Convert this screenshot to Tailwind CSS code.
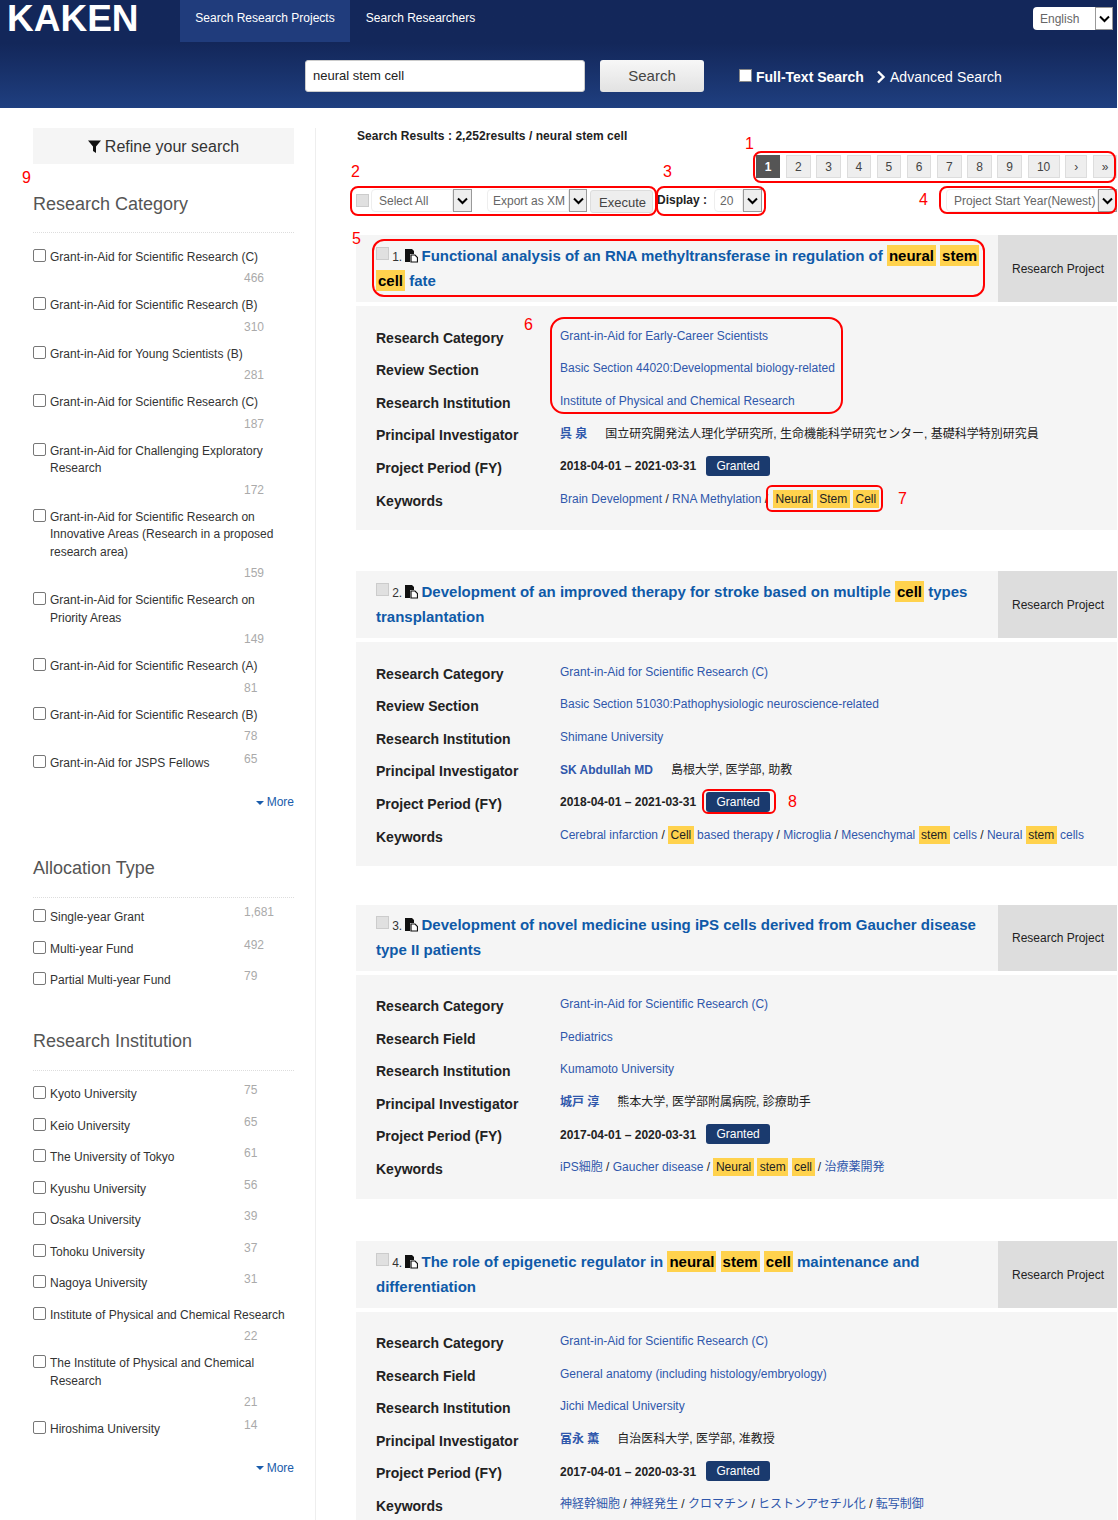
<!doctype html>
<html lang="en">
<head>
    <meta charset="UTF-8">
    <meta name="viewport" content="width=device-width, initial-scale=1.0">
    <script src="https://cdn.jsdelivr.net/npm/@tailwindcss/browser@4"></script>
    <title>KAKEN - Search Research Projects</title>
</head>
<body class="bg-white">
<div class="relative w-[1118px] h-[1520px] overflow-hidden text-[12px] text-[#333] [font-family:'Liberation_Sans','Noto_Sans_CJK_JP',sans-serif]">

    <!-- header -->
    <header class="w-[1117px] h-[108px] bg-gradient-to-b from-[#13275a] from-40% to-[#1f3f80]">
        <div class="flex h-[42px]">
            <a class="w-[180px] pl-[7px] pt-[1px] text-[37px] leading-[36px] font-bold text-white">KAKEN</a>
            <a class="w-[170px] h-[42px] pb-[6px] flex items-center justify-center bg-[#203c7c] text-white">Search Research Projects</a>
            <a class="w-[141px] h-[42px] pb-[6px] flex items-center justify-center text-white">Search Researchers</a>
            <div class="ml-auto mr-[4px] mt-[7px] flex h-[23px]">
                <select class="appearance-none w-[62px] h-[23px] pl-[7px] bg-white rounded-l-[4px] text-[#666]"><option>English</option></select>
                <span class="w-[18px] h-[23px] flex items-center justify-center bg-white border border-[#999]"><svg class="w-[11px] h-[8px]" viewBox="0 0 11 8"><path d="M1 1.5l4.5 4.5L10 1.5" fill="none" stroke="#000" stroke-width="2"/></svg></span>
            </div>
        </div>
        <div class="flex items-center pl-[305px] mt-[18px]">
            <input type="text" value="neural stem cell" class="w-[280px] h-[32px] px-[7px] pb-[2px] bg-white rounded-[3px] border border-[#ccc] text-[13px] text-[#222]">
            <button class="ml-[15px] w-[104px] h-[32px] rounded-[3px] bg-gradient-to-b from-[#f7f7f7] to-[#e2e2e2] text-[15px] text-[#444]">Search</button>
            <input type="checkbox" class="appearance-none ml-[35px] -mt-[2px] w-[13px] h-[13px] bg-white border border-[#888]">
            <span class="ml-[4px] pt-[2px] text-[14px] font-bold text-white">Full-Text Search</span>
            <svg class="ml-[12px] mt-[2px] w-[10px] h-[14px]" viewBox="0 0 10 14"><path d="M2 1.5l5.5 5.5L2 12.5" fill="none" stroke="#fff" stroke-width="2.4"/></svg>
            <span class="ml-[4px] pt-[2px] text-[14px] tracking-[0.1px] text-white">Advanced Search</span>
        </div>
    </header>

    <div class="flex">
        <!-- sidebar -->
        <aside class="mt-[20px] w-[316px] h-[1392px] pl-[33px] pr-[21px] border-r border-[#eee]">
            <div class="h-[36px] pt-[1px] flex items-center justify-center bg-[#f5f5f5] text-[16px] text-[#333]">
                <svg class="w-[13px] h-[13px] mr-[4px]" viewBox="0 0 13 13"><path d="M0 .5h13L8 6.5V13L5 11V6.5z" fill="#111"/></svg>Refine your search
            </div>

            <h2 class="mt-[26px] h-[43px] pb-[15px] leading-[28px] text-[18px] text-[#555] border-b border-dotted border-[#ddd]">Research Category</h2>
            <div class="mt-[15.5px]">
                <div><div class="flex leading-[17.5px]"><input type="checkbox" class="appearance-none shrink-0 w-[13px] h-[13px] mr-[4px] border border-[#777] rounded-[2px]"><span>Grant-in-Aid for Scientific Research (C)</span></div><div class="h-[31px] pl-[211px] pt-[1px] leading-[22px] text-[#aaa]">466</div></div>
                <div><div class="flex leading-[17.5px]"><input type="checkbox" class="appearance-none shrink-0 w-[13px] h-[13px] mr-[4px] border border-[#777] rounded-[2px]"><span>Grant-in-Aid for Scientific Research (B)</span></div><div class="h-[31px] pl-[211px] pt-[1px] leading-[22px] text-[#aaa]">310</div></div>
                <div><div class="flex leading-[17.5px]"><input type="checkbox" class="appearance-none shrink-0 w-[13px] h-[13px] mr-[4px] border border-[#777] rounded-[2px]"><span>Grant-in-Aid for Young Scientists (B)</span></div><div class="h-[31px] pl-[211px] pt-[1px] leading-[22px] text-[#aaa]">281</div></div>
                <div><div class="flex leading-[17.5px]"><input type="checkbox" class="appearance-none shrink-0 w-[13px] h-[13px] mr-[4px] border border-[#777] rounded-[2px]"><span>Grant-in-Aid for Scientific Research (C)</span></div><div class="h-[31px] pl-[211px] pt-[1px] leading-[22px] text-[#aaa]">187</div></div>
                <div><div class="flex leading-[17.5px]"><input type="checkbox" class="appearance-none shrink-0 w-[13px] h-[13px] mr-[4px] border border-[#777] rounded-[2px]"><span>Grant-in-Aid for Challenging Exploratory Research</span></div><div class="h-[31px] pl-[211px] pt-[1px] leading-[22px] text-[#aaa]">172</div></div>
                <div><div class="flex leading-[17.5px]"><input type="checkbox" class="appearance-none shrink-0 w-[13px] h-[13px] mr-[4px] border border-[#777] rounded-[2px]"><span>Grant-in-Aid for Scientific Research on Innovative Areas (Research in a proposed research area)</span></div><div class="h-[31px] pl-[211px] pt-[1px] leading-[22px] text-[#aaa]">159</div></div>
                <div><div class="flex leading-[17.5px]"><input type="checkbox" class="appearance-none shrink-0 w-[13px] h-[13px] mr-[4px] border border-[#777] rounded-[2px]"><span>Grant-in-Aid for Scientific Research on Priority Areas</span></div><div class="h-[31px] pl-[211px] pt-[1px] leading-[22px] text-[#aaa]">149</div></div>
                <div><div class="flex leading-[17.5px]"><input type="checkbox" class="appearance-none shrink-0 w-[13px] h-[13px] mr-[4px] border border-[#777] rounded-[2px]"><span>Grant-in-Aid for Scientific Research (A)</span></div><div class="h-[31px] pl-[211px] pt-[1px] leading-[22px] text-[#aaa]">81</div></div>
                <div><div class="flex leading-[17.5px]"><input type="checkbox" class="appearance-none shrink-0 w-[13px] h-[13px] mr-[4px] border border-[#777] rounded-[2px]"><span>Grant-in-Aid for Scientific Research (B)</span></div><div class="h-[31px] pl-[211px] pt-[1px] leading-[22px] text-[#aaa]">78</div></div>
                <div class="flex leading-[17.5px]"><input type="checkbox" class="appearance-none shrink-0 w-[13px] h-[13px] mr-[4px] border border-[#777] rounded-[2px]"><span class="w-[194px]">Grant-in-Aid for JSPS Fellows</span><span class="-mt-[4px] text-[#aaa]">65</span></div>
            </div>
            <div class="mt-[21.5px] flex items-center justify-end leading-[16px] text-[#1a5cab]"><span class="mr-[3px] mt-[1px] border-x-[4px] border-t-[4px] border-x-transparent border-t-[#1a5cab]"></span>More</div>

            <h2 class="mt-[44px] h-[44px] pb-[16px] leading-[28px] text-[18px] text-[#555] border-b border-dotted border-[#ddd]">Allocation Type</h2>
            <div class="mt-[11px]">
                <div class="flex h-[31.5px] leading-[17.5px]"><input type="checkbox" class="appearance-none shrink-0 w-[13px] h-[13px] mr-[4px] border border-[#777] rounded-[2px]"><span class="w-[194px]">Single-year Grant</span><span class="-mt-[5px] text-[#aaa]">1,681</span></div>
                <div class="flex h-[31.5px] leading-[17.5px]"><input type="checkbox" class="appearance-none shrink-0 w-[13px] h-[13px] mr-[4px] border border-[#777] rounded-[2px]"><span class="w-[194px]">Multi-year Fund</span><span class="-mt-[4px] text-[#aaa]">492</span></div>
                <div class="flex h-[31.5px] leading-[17.5px]"><input type="checkbox" class="appearance-none shrink-0 w-[13px] h-[13px] mr-[4px] border border-[#777] rounded-[2px]"><span class="w-[194px]">Partial Multi-year Fund</span><span class="-mt-[4px] text-[#aaa]">79</span></div>
            </div>

            <h2 class="mt-[23px] h-[44px] pb-[16px] leading-[28px] text-[18px] text-[#555] border-b border-dotted border-[#ddd]">Research Institution</h2>
            <div class="mt-[15.5px]">
                <div class="flex h-[31.5px] leading-[17.5px]"><input type="checkbox" class="appearance-none shrink-0 w-[13px] h-[13px] mr-[4px] border border-[#777] rounded-[2px]"><span class="w-[194px]">Kyoto University</span><span class="-mt-[4px] text-[#aaa]">75</span></div>
                <div class="flex h-[31.5px] leading-[17.5px]"><input type="checkbox" class="appearance-none shrink-0 w-[13px] h-[13px] mr-[4px] border border-[#777] rounded-[2px]"><span class="w-[194px]">Keio University</span><span class="-mt-[4px] text-[#aaa]">65</span></div>
                <div class="flex h-[31.5px] leading-[17.5px]"><input type="checkbox" class="appearance-none shrink-0 w-[13px] h-[13px] mr-[4px] border border-[#777] rounded-[2px]"><span class="w-[194px]">The University of Tokyo</span><span class="-mt-[4px] text-[#aaa]">61</span></div>
                <div class="flex h-[31.5px] leading-[17.5px]"><input type="checkbox" class="appearance-none shrink-0 w-[13px] h-[13px] mr-[4px] border border-[#777] rounded-[2px]"><span class="w-[194px]">Kyushu University</span><span class="-mt-[4px] text-[#aaa]">56</span></div>
                <div class="flex h-[31.5px] leading-[17.5px]"><input type="checkbox" class="appearance-none shrink-0 w-[13px] h-[13px] mr-[4px] border border-[#777] rounded-[2px]"><span class="w-[194px]">Osaka University</span><span class="-mt-[4px] text-[#aaa]">39</span></div>
                <div class="flex h-[31.5px] leading-[17.5px]"><input type="checkbox" class="appearance-none shrink-0 w-[13px] h-[13px] mr-[4px] border border-[#777] rounded-[2px]"><span class="w-[194px]">Tohoku University</span><span class="-mt-[4px] text-[#aaa]">37</span></div>
                <div class="flex h-[31.5px] leading-[17.5px]"><input type="checkbox" class="appearance-none shrink-0 w-[13px] h-[13px] mr-[4px] border border-[#777] rounded-[2px]"><span class="w-[194px]">Nagoya University</span><span class="-mt-[4px] text-[#aaa]">31</span></div>
                <div><div class="flex leading-[17.5px]"><input type="checkbox" class="appearance-none shrink-0 w-[13px] h-[13px] mr-[4px] border border-[#777] rounded-[2px]"><span>Institute of Physical and Chemical Research</span></div><div class="h-[31px] pl-[211px] pt-[1px] leading-[22px] text-[#aaa]">22</div></div>
                <div><div class="flex leading-[17.5px]"><input type="checkbox" class="appearance-none shrink-0 w-[13px] h-[13px] mr-[4px] border border-[#777] rounded-[2px]"><span>The Institute of Physical and Chemical Research</span></div><div class="h-[31px] pl-[211px] pt-[1px] leading-[22px] text-[#aaa]">21</div></div>
                <div class="flex leading-[17.5px]"><input type="checkbox" class="appearance-none shrink-0 w-[13px] h-[13px] mr-[4px] border border-[#777] rounded-[2px]"><span class="w-[194px]">Hiroshima University</span><span class="-mt-[4px] text-[#aaa]">14</span></div>
            </div>
            <div class="mt-[21px] flex items-center justify-end leading-[16px] text-[#1a5cab]"><span class="mr-[3px] mt-[1px] border-x-[4px] border-t-[4px] border-x-transparent border-t-[#1a5cab]"></span>More</div>
        </aside>

        <!-- results -->
        <main class="pl-[40px] w-[801px]">
            <p class="mt-[20px] pl-[1px] leading-[16px] font-bold tracking-[0.06px] text-[#222]">Search Results : 2,252results / neural stem cell</p>
            <nav class="mt-[11px] flex justify-end gap-[5.7px] text-[#444]">
                <a class="w-[24.5px] h-[23px] flex items-center justify-center bg-[#555] font-bold text-white">1</a>
                <a class="w-[24.5px] h-[23px] flex items-center justify-center bg-[#eee] border border-[#ddd]">2</a>
                <a class="w-[24.5px] h-[23px] flex items-center justify-center bg-[#eee] border border-[#ddd]">3</a>
                <a class="w-[24.5px] h-[23px] flex items-center justify-center bg-[#eee] border border-[#ddd]">4</a>
                <a class="w-[24.5px] h-[23px] flex items-center justify-center bg-[#eee] border border-[#ddd]">5</a>
                <a class="w-[24.5px] h-[23px] flex items-center justify-center bg-[#eee] border border-[#ddd]">6</a>
                <a class="w-[24.5px] h-[23px] flex items-center justify-center bg-[#eee] border border-[#ddd]">7</a>
                <a class="w-[24.5px] h-[23px] flex items-center justify-center bg-[#eee] border border-[#ddd]">8</a>
                <a class="w-[24.5px] h-[23px] flex items-center justify-center bg-[#eee] border border-[#ddd]">9</a>
                <a class="w-[32px] h-[23px] flex items-center justify-center bg-[#eee] border border-[#ddd]">10</a>
                <a class="w-[22px] h-[23px] flex items-center justify-center bg-[#eee] border border-[#ddd]">›</a>
                <a class="w-[24px] h-[23px] flex items-center justify-center bg-[#eee] border border-[#ddd]">»</a>
            </nav>

            <div class="mt-[11px] h-[23px] flex items-center">
                <input type="checkbox" class="appearance-none w-[13px] h-[13px] bg-[#e0e0e0] border border-[#ccc]">
                <div class="ml-[2px] flex h-[23px]">
                    <select class="appearance-none w-[82px] h-[23px] pl-[7px] border border-[#eee] rounded-l-[4px] text-[#666]"><option>Select All</option></select>
                    <span class="w-[19px] h-[23px] flex items-center justify-center bg-[#eee] border border-[#999]"><svg class="w-[11px] h-[8px]" viewBox="0 0 11 8"><path d="M1 1.5l4.5 4.5L10 1.5" fill="none" stroke="#000" stroke-width="2"/></svg></span>
                </div>
                <div class="ml-[15px] flex h-[23px]">
                    <select class="appearance-none w-[82px] h-[23px] pl-[5px] pr-[3px] border border-[#eee] rounded-l-[4px] text-[#666]"><option>Export as XML</option></select>
                    <span class="w-[18px] h-[23px] flex items-center justify-center bg-[#eee] border border-[#999]"><svg class="w-[11px] h-[8px]" viewBox="0 0 11 8"><path d="M1 1.5l4.5 4.5L10 1.5" fill="none" stroke="#000" stroke-width="2"/></svg></span>
                </div>
                <button class="ml-[3px] mt-[2px] pl-[2px] pt-[2px] w-[63px] h-[23px] bg-[#eee] border border-[#ddd] rounded-[3px] text-[13px] text-[#444]">Execute</button>
                <span class="ml-[4px] -mt-[1px] font-bold text-[#222]">Display :</span>
                <div class="ml-[7px] flex h-[23px]">
                    <select class="appearance-none w-[29px] h-[23px] pl-[5px] border border-[#eee] rounded-l-[4px] text-[#666]"><option>20</option></select>
                    <span class="w-[19px] h-[23px] flex items-center justify-center bg-[#eee] border border-[#999]"><svg class="w-[11px] h-[8px]" viewBox="0 0 11 8"><path d="M1 1.5l4.5 4.5L10 1.5" fill="none" stroke="#000" stroke-width="2"/></svg></span>
                </div>
                <div class="ml-auto flex h-[23px]">
                    <select class="appearance-none w-[152px] h-[23px] pl-[7px] border border-[#eee] rounded-l-[4px] text-[#666]"><option>Project Start Year(Newest)</option></select>
                    <span class="w-[19px] h-[23px] flex items-center justify-center bg-[#eee] border border-[#999]"><svg class="w-[11px] h-[8px]" viewBox="0 0 11 8"><path d="M1 1.5l4.5 4.5L10 1.5" fill="none" stroke="#000" stroke-width="2"/></svg></span>
                </div>
            </div>

            <!-- result 1 -->
            <section class="mt-[23px]">
                <div class="flex h-[67px] bg-[#f5f5f5]">
                    <h3 class="flex-1 pl-[20px] pr-[13px] pt-[9px] leading-[24px] text-[15px] font-bold text-[#0f5aa8]">
                        <input type="checkbox" class="appearance-none inline-block align-[1px] w-[13px] h-[13px] bg-[#e0e0e0] border border-[#ccc]">
                        <span class="-ml-[1px] text-[12px] font-normal text-[#333]">1.</span>
                        <svg class="inline-block align-[-2px] -ml-[1px] -mr-[1px] w-[13px] h-[14px]" viewBox="0 0 13 14"><path d="M0 0h7l2 2v3H5v8H0z" fill="#111"/><path d="M6 6h4l2.5 2.5V13H6z" fill="#fff" stroke="#111" stroke-width="1.2"/></svg>
                        Functional analysis of an RNA methyltransferase in regulation of
                        <mark class="inline-block leading-[21px] bg-[#ffd24d] text-black px-[2px]">neural</mark>
                        <mark class="inline-block leading-[21px] bg-[#ffd24d] text-black px-[2px]">stem</mark>
                        <mark class="inline-block leading-[21px] bg-[#ffd24d] text-black px-[2px]">cell</mark>
                        fate
                    </h3>
                    <div class="w-[119px] pl-[1px] flex items-center justify-center bg-[#ddd] text-[#222]">Research Project</div>
                </div>
                <div class="mt-[4px] h-[224px] pt-[14.5px] bg-[#f5f5f5]">
                    <div class="flex items-center h-[32.6px] pl-[20px]"><span class="w-[184px] pt-[2.5px] text-[14px] font-bold text-[#222]">Research Category</span><a class="pb-[2px] text-[#2f57ab]">Grant-in-Aid for Early-Career Scientists</a></div>
                    <div class="flex items-center h-[32.6px] pl-[20px]"><span class="w-[184px] pt-[2.5px] text-[14px] font-bold text-[#222]">Review Section</span><a class="pb-[2px] text-[#2f57ab]">Basic Section 44020:Developmental biology-related</a></div>
                    <div class="flex items-center h-[32.6px] pl-[20px]"><span class="w-[184px] pt-[2.5px] text-[14px] font-bold text-[#222]">Research Institution</span><a class="pb-[2px] text-[#2f57ab]">Institute of Physical and Chemical Research</a></div>
                    <div class="flex items-center h-[32.6px] pl-[20px]"><span class="w-[184px] pt-[2.5px] text-[14px] font-bold text-[#222]">Principal Investigator</span><a class="pb-[2px] font-bold text-[#2f57ab]">呉 泉</a><span class="ml-[18px] pb-[2px] text-[#222]">国立研究開発法人理化学研究所, 生命機能科学研究センター, 基礎科学特別研究員</span></div>
                    <div class="flex items-center h-[32.6px] pl-[20px]"><span class="w-[184px] pt-[2.5px] text-[14px] font-bold text-[#222]">Project Period (FY)</span><span class="pb-[2px] font-bold text-[#222]">2018-04-01 – 2021-03-31</span><span class="ml-[10px] mb-[3px] w-[64px] h-[20px] flex items-center justify-center rounded-[3px] bg-[#1a3a6e] text-white">Granted</span></div>
                    <div class="flex items-center h-[32.6px] pl-[20px]"><span class="w-[184px] pt-[2.5px] text-[14px] font-bold text-[#222]">Keywords</span><span class="pb-[2px] text-[#2f57ab]">Brain Development <span class="text-[#222]">/</span> RNA Methylation <span class="text-[#222]">/</span> <mark class="inline-block leading-[18px] bg-[#ffd24d] text-[#222] px-[2.5px] ml-[1.5px]">Neural</mark> <mark class="inline-block leading-[18px] bg-[#ffd24d] text-[#222] px-[2.5px]">Stem</mark> <mark class="inline-block leading-[18px] bg-[#ffd24d] text-[#222] px-[2.5px]">Cell</mark></span></div>
                </div>
            </section>

            <!-- result 2 -->
            <section class="mt-[41px]">
                <div class="flex h-[67px] bg-[#f5f5f5]">
                    <h3 class="flex-1 pl-[20px] pr-[13px] pt-[9px] leading-[24px] text-[15px] font-bold text-[#0f5aa8]">
                        <input type="checkbox" class="appearance-none inline-block align-[1px] w-[13px] h-[13px] bg-[#e0e0e0] border border-[#ccc]">
                        <span class="-ml-[1px] text-[12px] font-normal text-[#333]">2.</span>
                        <svg class="inline-block align-[-2px] -ml-[1px] -mr-[1px] w-[13px] h-[14px]" viewBox="0 0 13 14"><path d="M0 0h7l2 2v3H5v8H0z" fill="#111"/><path d="M6 6h4l2.5 2.5V13H6z" fill="#fff" stroke="#111" stroke-width="1.2"/></svg>
                        Development of an improved therapy for stroke based on multiple
                        <mark class="inline-block leading-[21px] bg-[#ffd24d] text-black px-[2px]">cell</mark>
                        types transplantation
                    </h3>
                    <div class="w-[119px] pl-[1px] flex items-center justify-center bg-[#ddd] text-[#222]">Research Project</div>
                </div>
                <div class="mt-[4px] h-[224px] pt-[14.5px] bg-[#f5f5f5]">
                    <div class="flex items-center h-[32.6px] pl-[20px]"><span class="w-[184px] pt-[2.5px] text-[14px] font-bold text-[#222]">Research Category</span><a class="pb-[2px] text-[#2f57ab]">Grant-in-Aid for Scientific Research (C)</a></div>
                    <div class="flex items-center h-[32.6px] pl-[20px]"><span class="w-[184px] pt-[2.5px] text-[14px] font-bold text-[#222]">Review Section</span><a class="pb-[2px] text-[#2f57ab]">Basic Section 51030:Pathophysiologic neuroscience-related</a></div>
                    <div class="flex items-center h-[32.6px] pl-[20px]"><span class="w-[184px] pt-[2.5px] text-[14px] font-bold text-[#222]">Research Institution</span><a class="pb-[2px] text-[#2f57ab]">Shimane University</a></div>
                    <div class="flex items-center h-[32.6px] pl-[20px]"><span class="w-[184px] pt-[2.5px] text-[14px] font-bold text-[#222]">Principal Investigator</span><a class="pb-[2px] font-bold text-[#2f57ab]">SK Abdullah MD</a><span class="ml-[18px] pb-[2px] text-[#222]">島根大学, 医学部, 助教</span></div>
                    <div class="flex items-center h-[32.6px] pl-[20px]"><span class="w-[184px] pt-[2.5px] text-[14px] font-bold text-[#222]">Project Period (FY)</span><span class="pb-[2px] font-bold text-[#222]">2018-04-01 – 2021-03-31</span><span class="ml-[10px] mb-[3px] w-[64px] h-[20px] flex items-center justify-center rounded-[3px] bg-[#1a3a6e] text-white">Granted</span></div>
                    <div class="flex items-center h-[32.6px] pl-[20px]"><span class="w-[184px] pt-[2.5px] text-[14px] font-bold text-[#222]">Keywords</span><span class="pb-[2px] text-[#2f57ab]">Cerebral infarction <span class="text-[#222]">/</span> <mark class="inline-block leading-[18px] bg-[#ffd24d] text-[#222] px-[2.5px]">Cell</mark> based therapy <span class="text-[#222]">/</span> Microglia <span class="text-[#222]">/</span> Mesenchymal <mark class="inline-block leading-[18px] bg-[#ffd24d] text-[#222] px-[2.5px]">stem</mark> cells <span class="text-[#222]">/</span> Neural <mark class="inline-block leading-[18px] bg-[#ffd24d] text-[#222] px-[2.5px]">stem</mark> cells</span></div>
                </div>
            </section>

            <!-- result 3 -->
            <section class="mt-[39px]">
                <div class="flex h-[66px] bg-[#f5f5f5]">
                    <h3 class="flex-1 pl-[20px] pr-[13px] pt-[8px] leading-[24px] text-[15px] font-bold text-[#0f5aa8]">
                        <input type="checkbox" class="appearance-none inline-block align-[1px] w-[13px] h-[13px] bg-[#e0e0e0] border border-[#ccc]">
                        <span class="-ml-[1px] text-[12px] font-normal text-[#333]">3.</span>
                        <svg class="inline-block align-[-2px] -ml-[1px] -mr-[1px] w-[13px] h-[14px]" viewBox="0 0 13 14"><path d="M0 0h7l2 2v3H5v8H0z" fill="#111"/><path d="M6 6h4l2.5 2.5V13H6z" fill="#fff" stroke="#111" stroke-width="1.2"/></svg>
                        Development of novel medicine using iPS cells derived from Gaucher disease type II patients
                    </h3>
                    <div class="w-[119px] pl-[1px] flex items-center justify-center bg-[#ddd] text-[#222]">Research Project</div>
                </div>
                <div class="mt-[4px] h-[224px] pt-[14px] bg-[#f5f5f5]">
                    <div class="flex items-center h-[32.6px] pl-[20px]"><span class="w-[184px] pt-[2.5px] text-[14px] font-bold text-[#222]">Research Category</span><a class="pb-[2px] text-[#2f57ab]">Grant-in-Aid for Scientific Research (C)</a></div>
                    <div class="flex items-center h-[32.6px] pl-[20px]"><span class="w-[184px] pt-[2.5px] text-[14px] font-bold text-[#222]">Research Field</span><a class="pb-[2px] text-[#2f57ab]">Pediatrics</a></div>
                    <div class="flex items-center h-[32.6px] pl-[20px]"><span class="w-[184px] pt-[2.5px] text-[14px] font-bold text-[#222]">Research Institution</span><a class="pb-[2px] text-[#2f57ab]">Kumamoto University</a></div>
                    <div class="flex items-center h-[32.6px] pl-[20px]"><span class="w-[184px] pt-[2.5px] text-[14px] font-bold text-[#222]">Principal Investigator</span><a class="pb-[2px] font-bold text-[#2f57ab]">城戸 淳</a><span class="ml-[18px] pb-[2px] text-[#222]">熊本大学, 医学部附属病院, 診療助手</span></div>
                    <div class="flex items-center h-[32.6px] pl-[20px]"><span class="w-[184px] pt-[2.5px] text-[14px] font-bold text-[#222]">Project Period (FY)</span><span class="pb-[2px] font-bold text-[#222]">2017-04-01 – 2020-03-31</span><span class="ml-[10px] mb-[3px] w-[64px] h-[20px] flex items-center justify-center rounded-[3px] bg-[#1a3a6e] text-white">Granted</span></div>
                    <div class="flex items-center h-[32.6px] pl-[20px]"><span class="w-[184px] pt-[2.5px] text-[14px] font-bold text-[#222]">Keywords</span><span class="pb-[2px] text-[#2f57ab]">iPS細胞 <span class="text-[#222]">/</span> Gaucher disease <span class="text-[#222]">/</span> <mark class="inline-block leading-[18px] bg-[#ffd24d] text-[#222] px-[2.5px]">Neural</mark> <mark class="inline-block leading-[18px] bg-[#ffd24d] text-[#222] px-[2.5px]">stem</mark> <mark class="inline-block leading-[18px] bg-[#ffd24d] text-[#222] px-[2.5px]">cell</mark> <span class="text-[#222]">/</span> 治療薬開発</span></div>
                </div>
            </section>

            <!-- result 4 -->
            <section class="mt-[42px]">
                <div class="flex h-[67px] bg-[#f5f5f5]">
                    <h3 class="flex-1 pl-[20px] pr-[13px] pt-[9px] leading-[24px] text-[15px] font-bold text-[#0f5aa8]">
                        <input type="checkbox" class="appearance-none inline-block align-[1px] w-[13px] h-[13px] bg-[#e0e0e0] border border-[#ccc]">
                        <span class="-ml-[1px] text-[12px] font-normal text-[#333]">4.</span>
                        <svg class="inline-block align-[-2px] -ml-[1px] -mr-[1px] w-[13px] h-[14px]" viewBox="0 0 13 14"><path d="M0 0h7l2 2v3H5v8H0z" fill="#111"/><path d="M6 6h4l2.5 2.5V13H6z" fill="#fff" stroke="#111" stroke-width="1.2"/></svg>
                        The role of epigenetic regulator in
                        <mark class="inline-block leading-[21px] bg-[#ffd24d] text-black px-[2px]">neural</mark>
                        <mark class="inline-block leading-[21px] bg-[#ffd24d] text-black px-[2px]">stem</mark>
                        <mark class="inline-block leading-[21px] bg-[#ffd24d] text-black px-[2px]">cell</mark>
                        maintenance and differentiation
                    </h3>
                    <div class="w-[119px] pl-[1px] flex items-center justify-center bg-[#ddd] text-[#222]">Research Project</div>
                </div>
                <div class="mt-[4px] h-[224px] pt-[14px] bg-[#f5f5f5]">
                    <div class="flex items-center h-[32.6px] pl-[20px]"><span class="w-[184px] pt-[2.5px] text-[14px] font-bold text-[#222]">Research Category</span><a class="pb-[2px] text-[#2f57ab]">Grant-in-Aid for Scientific Research (C)</a></div>
                    <div class="flex items-center h-[32.6px] pl-[20px]"><span class="w-[184px] pt-[2.5px] text-[14px] font-bold text-[#222]">Research Field</span><a class="pb-[2px] text-[#2f57ab]">General anatomy (including histology/embryology)</a></div>
                    <div class="flex items-center h-[32.6px] pl-[20px]"><span class="w-[184px] pt-[2.5px] text-[14px] font-bold text-[#222]">Research Institution</span><a class="pb-[2px] text-[#2f57ab]">Jichi Medical University</a></div>
                    <div class="flex items-center h-[32.6px] pl-[20px]"><span class="w-[184px] pt-[2.5px] text-[14px] font-bold text-[#222]">Principal Investigator</span><a class="pb-[2px] font-bold text-[#2f57ab]">冨永 薫</a><span class="ml-[18px] pb-[2px] text-[#222]">自治医科大学, 医学部, 准教授</span></div>
                    <div class="flex items-center h-[32.6px] pl-[20px]"><span class="w-[184px] pt-[2.5px] text-[14px] font-bold text-[#222]">Project Period (FY)</span><span class="pb-[2px] font-bold text-[#222]">2017-04-01 – 2020-03-31</span><span class="ml-[10px] mb-[3px] w-[64px] h-[20px] flex items-center justify-center rounded-[3px] bg-[#1a3a6e] text-white">Granted</span></div>
                    <div class="flex items-center h-[32.6px] pl-[20px]"><span class="w-[184px] pt-[2.5px] text-[14px] font-bold text-[#222]">Keywords</span><span class="pb-[2px] text-[#2f57ab]">神経幹細胞 <span class="text-[#222]">/</span> 神経発生 <span class="text-[#222]">/</span> クロマチン <span class="text-[#222]">/</span> ヒストンアセチル化 <span class="text-[#222]">/</span> 転写制御</span></div>
                </div>
            </section>
        </main>
    </div>

    <!-- red annotations drawn over the screenshot -->
    <div class="absolute left-[753px] top-[151px] w-[363px] h-[32px] border-2 border-[#f00] rounded-[8px]"></div>
    <div class="absolute left-[350px] top-[186px] w-[307px] h-[30px] border-2 border-[#f00] rounded-[8px]"></div>
    <div class="absolute left-[656px] top-[186px] w-[110px] h-[30px] border-2 border-[#f00] rounded-[8px]"></div>
    <div class="absolute left-[939px] top-[186px] w-[178px] h-[28px] border-2 border-[#f00] rounded-[8px]"></div>
    <div class="absolute left-[372px] top-[239px] w-[613px] h-[58px] border-2 border-[#f00] rounded-[12px]"></div>
    <div class="absolute left-[550px] top-[317px] w-[293px] h-[97px] border-2 border-[#f00] rounded-[14px]"></div>
    <div class="absolute left-[766px] top-[485px] w-[117px] h-[27px] border-2 border-[#f00] rounded-[6px]"></div>
    <div class="absolute left-[702px] top-[789px] w-[74px] h-[25px] border-2 border-[#f00] rounded-[6px]"></div>
    <span class="absolute left-[745px] top-[135px] text-[16px] leading-[18px] text-[#f00]">1</span>
    <span class="absolute left-[351px] top-[163px] text-[16px] leading-[18px] text-[#f00]">2</span>
    <span class="absolute left-[663px] top-[163px] text-[16px] leading-[18px] text-[#f00]">3</span>
    <span class="absolute left-[919px] top-[191px] text-[16px] leading-[18px] text-[#f00]">4</span>
    <span class="absolute left-[352px] top-[230px] text-[16px] leading-[18px] text-[#f00]">5</span>
    <span class="absolute left-[524px] top-[316px] text-[16px] leading-[18px] text-[#f00]">6</span>
    <span class="absolute left-[898px] top-[490px] text-[16px] leading-[18px] text-[#f00]">7</span>
    <span class="absolute left-[788px] top-[793px] text-[16px] leading-[18px] text-[#f00]">8</span>
    <span class="absolute left-[22px] top-[169px] text-[16px] leading-[18px] text-[#f00]">9</span>
</div>
</body>
</html>
